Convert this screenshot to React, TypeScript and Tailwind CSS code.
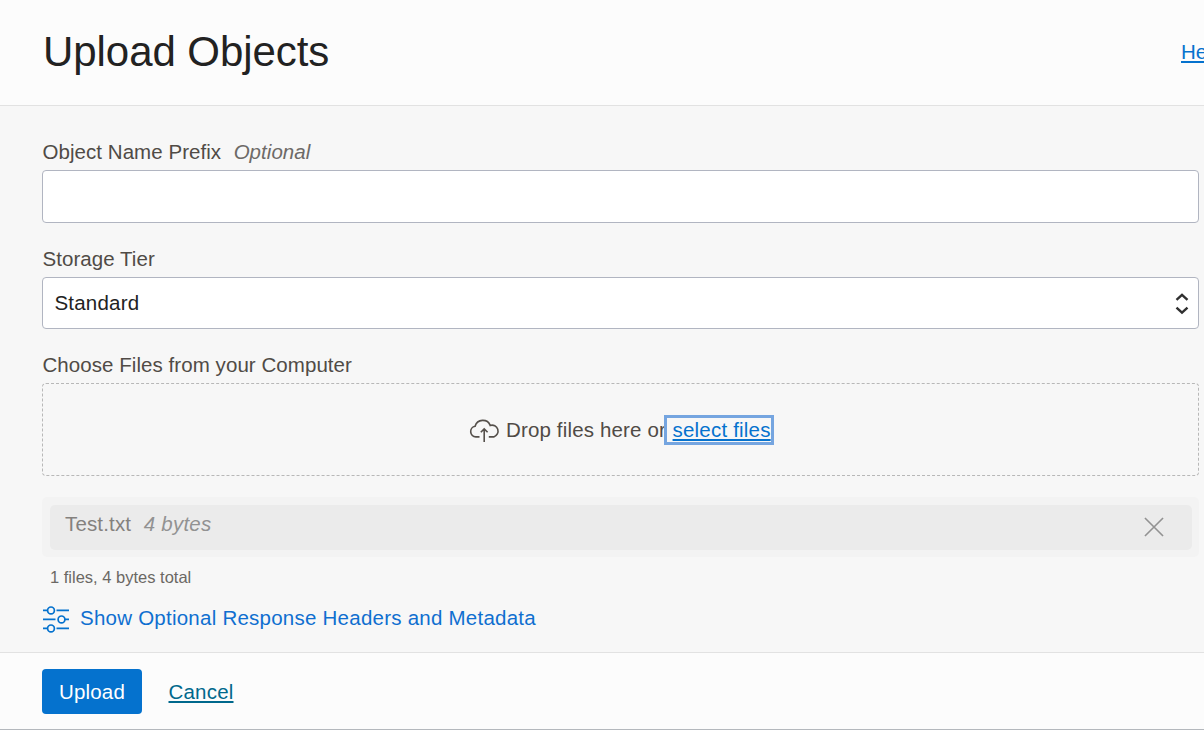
import React from "react";

function CloudUploadIcon() {
  return (
    <svg className="block h-[24px] w-[31px] shrink-0" viewBox="0 0 31 24" fill="none" stroke="#55504b" strokeWidth="1.6">
      <path d="M10.5 18.9H6.8A5.4 5.4 0 0 1 6.1 8.2A8 8 0 0 1 21.2 7.4A5.9 5.9 0 1 1 24.8 18.9H19.8" />
      <path d="M15.2 23.9V11.3M11.8 14.3L15.2 10.9L18.6 14.3" />
    </svg>
  );
}

function SlidersIcon() {
  return (
    <svg className="block h-[28px] w-[27px] shrink-0" viewBox="0 0 27 28" fill="none" stroke="#0572ce" strokeWidth="1.7">
      <path d="M1 5.4H5M14.5 5.4H27M1 14.4H13.5M23 14.4H27M1 23.4H5M14.5 23.4H27" />
      <circle cx="9" cy="5.4" r="3.4" />
      <circle cx="19.5" cy="14.4" r="3.4" />
      <circle cx="9" cy="23.4" r="3.4" />
    </svg>
  );
}

export default function App() {
  return (
    <div className="flex h-[730px] w-full flex-col overflow-hidden border-b border-[#b4b8bd] bg-[#fcfcfc] font-['Liberation_Sans',Arial,sans-serif] text-[20.5px] leading-6 whitespace-nowrap text-[#504b46]">
      <header className="flex h-[106px] shrink-0 items-center justify-between border-b border-[#e2e2e2] pl-[43px]">
        <h1 className="pb-0.5 text-[42px] leading-[48px] tracking-[-0.06px] text-[#222]">Upload Objects</h1>
        <div className="mb-0.5 w-[23px] overflow-hidden">
          <a className="text-[#0572ce] underline decoration-2 underline-offset-2">Help</a>
        </div>
      </header>

      <main className="flex h-[547px] shrink-0 flex-col border-b border-[#e2e2e2] bg-[#f7f7f7] pr-[5px] pl-[42px]">
        <label className="mt-[34px] flex h-[30px] gap-[12.5px] pl-[0.5px] tracking-[0.05px]">
          <span>Object Name Prefix</span>
          <em className="text-[#6d6a67]">Optional</em>
        </label>
        <input className="h-[53px] w-full rounded-[4px] border border-[#b1b5c1] bg-white px-3 outline-none" />

        <label className="mt-6 h-[30px] pl-[0.5px] tracking-[0.05px]">Storage Tier</label>
        <div className="flex h-[52px] items-center justify-between rounded-[4px] border border-[#b1b5c1] bg-white pr-[9px] pl-[11.5px] text-[#222]">
          <span className="tracking-[0.2px]">Standard</span>
          <svg className="block h-[24px] w-[14px]" viewBox="0 0 14 24" fill="none" stroke="#303030" strokeWidth="2.4">
            <path d="M1.5 8.8L7 3.8L12.5 8.8M1.5 16.6L7 21.6L12.5 16.6" />
          </svg>
        </div>

        <label className="mt-6 h-[30px] pl-[0.5px] tracking-[0.06px]">Choose Files from your Computer</label>
        <div className="flex h-[93px] shrink-0 items-center justify-center rounded-[4px] border border-dashed border-[#b8b8b8] pl-[2px]">
          <CloudUploadIcon />
          <span className="ml-[5.5px] tracking-[0.16px]">Drop files here or</span>
          <a className="-ml-[2.5px] flex h-[30px] w-[110px] items-center border-[3px] border-[#75a5e0] bg-[#f7f7f7] pl-[6px] tracking-[0.2px] text-[#0572ce] underline decoration-2 underline-offset-2">
            select files
          </a>
        </div>

        <section className="mt-[21px] h-[60px] shrink-0 rounded-[5px] bg-[#f3f3f3] pt-2 pr-[7px] pl-2">
          <div className="flex h-[45px] items-center rounded-[5px] bg-[#ebebeb] pr-[28px] pl-[15px] text-[#84817e]">
            <span className="pb-[7px] tracking-[0.15px]">Test.txt</span>
            <em className="ml-[12.5px] pb-[7px] tracking-[0.25px] text-[#929292]">4 bytes</em>
            <svg className="mb-px ml-auto block h-[20px] w-[20px]" viewBox="0 0 21 21" fill="none" stroke="#929292" strokeWidth="1.7">
              <path d="M1 1L20 20M20 1L1 20" />
            </svg>
          </div>
        </section>
        <p className="mt-[8px] pl-2 text-[16.5px] text-[#6b6864]">1 files, 4 bytes total</p>
        <a className="mt-[16px] flex items-center gap-[11px] tracking-[0.24px] text-[#0f6fd0]">
          <SlidersIcon />
          <span className="pb-[2px]">Show Optional Response Headers and Metadata</span>
        </a>
      </main>

      <footer className="flex flex-1 items-center pl-[42px]">
        <button className="h-[45px] w-[100px] rounded-[4px] bg-[#0572ce] pt-0.5 tracking-[0.2px] text-white">Upload</button>
        <a className="ml-[26.5px] pt-0.5 tracking-[0.2px] text-[#00688c] underline decoration-2 underline-offset-2">Cancel</a>
      </footer>
    </div>
  );
}
